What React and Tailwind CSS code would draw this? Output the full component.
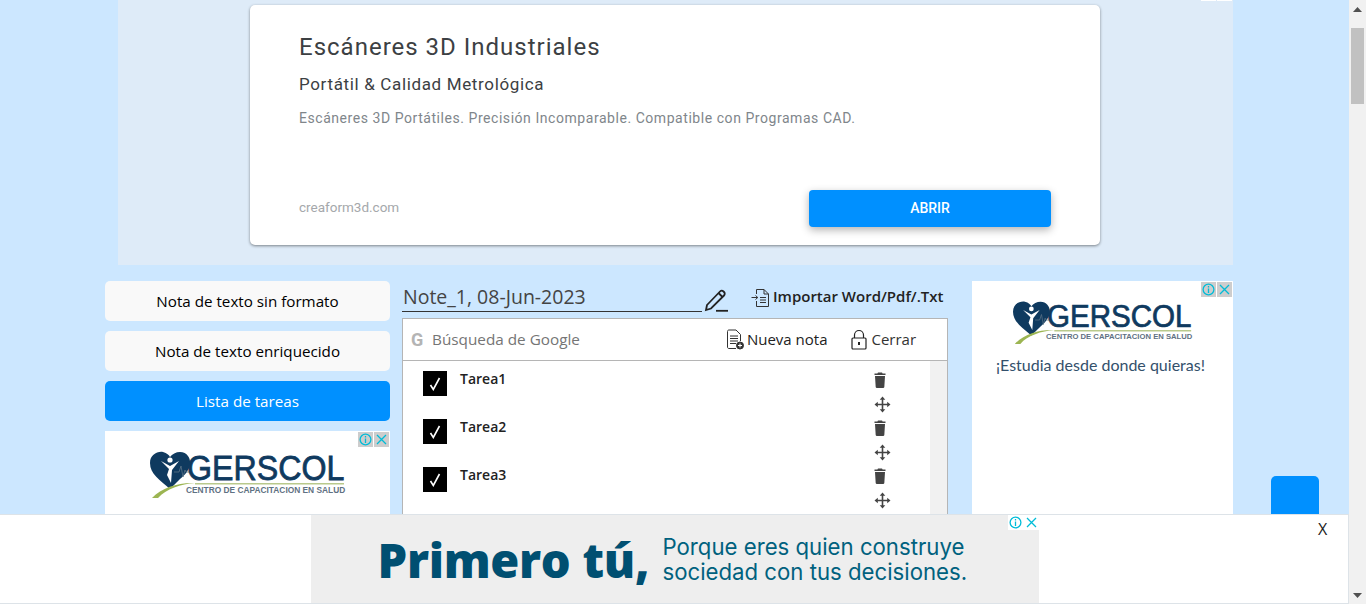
import React from "react";

const ui = "font-['Open_Sans','Noto_Sans',sans-serif]";

function AdChoices({ plain }) {
  return (
    <div className="flex gap-px">
      <span className={`w-[15px] h-[15px] flex items-center justify-center ${plain ? "bg-white" : "bg-[#cdcdcd]"}`}>
        <svg width="13" height="13" viewBox="0 0 13 13" fill="none" stroke="#00bcd8" strokeWidth="1.3">
          <circle cx="6.5" cy="6.5" r="5.4" />
          <path d="M6.5 5.5V10M6.5 3v1.4" />
        </svg>
      </span>
      <span className={`w-[15px] h-[15px] flex items-center justify-center ${plain ? "bg-white" : "bg-[#cdcdcd]"}`}>
        <svg width="13" height="13" viewBox="0 0 13 13" fill="none" stroke="#00bcd8" strokeWidth="1.3">
          <path d="M2 2l9 9M11 2l-9 9" />
        </svg>
      </span>
    </div>
  );
}

function Logo({ className }) {
  return (
    <svg viewBox="0 -6 196 52" className={className}>
      <path d="M20 37 C10 28 0 22 0 11 C0 3 7 -1 13 0 C17 1 19 3 20 5 C22 2 26 0 30 0 C37 0 41 6 40 13 C39 18 35 23 30 27 Z" fill="#0f3a5f" />
      <circle cx="20" cy="8" r="2.6" fill="#fff" />
      <path d="M11 9 L20 14 L29 9 L22 18 L21 31 L17 23 L19 17 Z" fill="#fff" />
      <path d="M24 20 H29 L31 14 L33 25 L35 18 L36 20 H42" fill="none" stroke="#5c7386" strokeWidth="0.8" />
      <path d="M2 46 C12 35 30 30 45 31 C31 32 16 37 8 46 Z" fill="#9cb552" />
      <path d="M45 31 H194 V32.4 H45 Z" fill="#b9c98c" />
      <text transform="translate(37 28) scale(0.92 1)" fontFamily="'Liberation Sans',sans-serif" fontSize="35" fill="#0f3a5f" stroke="#0f3a5f" strokeWidth="0.8">GERSCOL</text>
      <text transform="translate(36 41) scale(1.02 1)" fontFamily="'Liberation Sans',sans-serif" fontSize="8.2" fontWeight="700" fill="#5f7183">CENTRO DE CAPACITACION EN SALUD</text>
    </svg>
  );
}

function SideButton({ children, active }) {
  return (
    <div className={`h-10 rounded-[5px] flex items-center justify-center text-[15.2px] ${active ? "bg-[#0090ff] text-white" : "bg-[#f9f9f9] text-black"}`}>
      {children}
    </div>
  );
}

function MoveIcon() {
  return (
    <svg width="17" height="17" viewBox="0 0 17 17" fill="#444">
      <path d="M8.5 0.5L11.3 3.8H9.3V7.7H13.2V5.7L16.5 8.5L13.2 11.3V9.3H9.3V13.2H11.3L8.5 16.5L5.7 13.2H7.7V9.3H3.8V11.3L0.5 8.5L3.8 5.7V7.7H7.7V3.8H5.7Z" />
    </svg>
  );
}

function TrashIcon() {
  return (
    <svg width="12" height="16" viewBox="0 0 12 16" fill="#444">
      <path d="M4 0.5H8L8.6 1.4H11.5V3H0.5V1.4H3.4Z" />
      <path d="M1 4H11L10.3 15C10.2 15.6 9.8 16 9.2 16H2.8C2.2 16 1.8 15.6 1.7 15Z" />
    </svg>
  );
}

function Task({ label }) {
  return (
    <div className="h-12 flex">
      <div className="ml-5 mt-[10px] w-[24px] h-[25px] bg-black flex items-center justify-center">
        <svg width="12" height="14" viewBox="0 0 12 14" fill="none" stroke="#fff" strokeWidth="1.6">
          <path d="M1.5 8L4.3 12.5L10.5 1" />
        </svg>
      </div>
      <div className="ml-[13px] mt-[8px] h-fit text-[14px] leading-[20px] font-semibold text-[#222]">{label}</div>
      <div className="ml-auto mr-[39px] w-[17px] flex flex-col items-center pt-[11px]">
        <div className="-ml-[5px]"><TrashIcon /></div>
        <div className="mt-[8px]"><MoveIcon /></div>
      </div>
    </div>
  );
}

export default function App() {
  return (
    <div className={`relative w-[1366px] h-[604px] overflow-hidden flex bg-[#cce7ff] ${ui}`}>
      <main className="w-[1349px] shrink-0">
        {/* top ad */}
        <div className="ml-[118px] w-[1115px] h-[265px] bg-[#deebf8] pl-[132px] pt-[5px] font-['Roboto',sans-serif]">
          <div className="relative w-[850px] h-[240px] bg-white rounded-[5px] shadow-[0_1px_3px_rgba(0,0,0,0.45)] pl-[49px] pt-[27px] flex flex-col">
            <div className="text-[24px] leading-[30px] tracking-[1px] text-[#3c4043]">Escáneres 3D Industriales</div>
            <div className="mt-[10px] text-[17px] leading-[24px] tracking-[0.65px] text-[#3c4043]">Portátil &amp; Calidad Metrológica</div>
            <div className="mt-[12px] text-[14px] leading-[20px] tracking-[0.55px] text-[#80868b]">Escáneres 3D Portátiles. Precisión Incomparable. Compatible con Programas CAD.</div>
            <div className="mt-auto mb-[18px] pr-[49px] flex items-center justify-between">
              <div className="mb-[4px] text-[13.5px] leading-[18px] text-[#a5a8ab]">creaform3d.com</div>
              <div className="w-[242px] h-[37px] rounded-[4px] bg-[#0090ff] shadow-[0_3px_8px_rgba(0,0,0,0.3)] flex items-center justify-center text-white text-[14px] font-medium">ABRIR</div>
            </div>
          </div>
        </div>

        <div className="mt-4 ml-[105px] flex items-start">
          {/* left */}
          <div className="w-[285px] flex flex-col gap-[10px]">
            <SideButton>Nota de texto sin formato</SideButton>
            <SideButton>Nota de texto enriquecido</SideButton>
            <SideButton active>Lista de tareas</SideButton>
            <div className="relative h-[90px] bg-white flex justify-center pt-[15px]">
              <div className="absolute top-px right-px"><AdChoices /></div>
              <Logo className="w-[196px] h-[52px]" />
            </div>
          </div>

          {/* middle */}
          <div className="ml-3 w-[546px]">
            <div className="flex items-end h-[31px]">
              <div className="w-[300px] h-[31px] pl-px border-b border-[#333] text-[19.5px] leading-[31px] text-[#444]">Note_1, 08-Jun-2023</div>
              <svg width="24" height="24" viewBox="0 0 24 24" fill="none" stroke="#222" strokeWidth="1.8" className="ml-[2px]">
                <path d="M3 17L16 3.5C17 2.5 18.5 2.5 19.5 3.5L20 4C21 5 21 6.5 20 7.5L7 20.5L2 22Z" />
                <path d="M14.5 5L18.5 9" />
                <path d="M12 22.8H24" />
              </svg>
              <svg width="19" height="20" viewBox="0 0 19 20" fill="none" stroke="#333" strokeWidth="1" className="ml-[23px] mb-[4px]">
                <path d="M5.5 6V1.5H13L17.5 6V18.5H5.5V13" />
                <path d="M13 1.5V6H17.5M0.5 9.5H6.5M4.5 7.5L6.8 9.5L4.5 11.5M9 9.5H15M9 12H15M9 14.5H15" />
              </svg>
              <div className="ml-[3px] mb-[6px] text-[15px] leading-[20px] font-semibold text-[#222] whitespace-nowrap">Importar Word/Pdf/.Txt</div>
            </div>
            <div className="mt-[6px] border border-[#b5b5b5] bg-white">
              <div className="h-[42px] border-b border-[#b5b5b5] flex items-center">
                <span className="ml-2 w-[15px] text-[18px] font-bold font-['Roboto',sans-serif] text-[#b4b4b4] leading-none">G</span>
                <span className="ml-[6px] text-[15.3px] text-[#757575]">Búsqueda de Google</span>
                <svg width="18" height="21" viewBox="0 0 18 21" fill="none" stroke="#333" strokeWidth="1" className="ml-[146px]">
                  <path d="M10 19.5H3C2 19.5 1.5 19 1.5 18V2.5C1.5 1.5 2 1 3 1H10L14.5 5.5V12" />
                  <path d="M4 7H12M4 9.5H12M4 12H12M4 14.5H10" />
                  <circle cx="14" cy="16.5" r="3.5" fill="#333" />
                  <path d="M12 16.5H16M14 14.5V18.5" stroke="#fff" />
                </svg>
                <span className="ml-[3px] text-[15px] text-[#222]">Nueva nota</span>
                <svg width="16" height="21" viewBox="0 0 16 21" fill="none" stroke="#222" strokeWidth="1.2" className="ml-[24px]">
                  <path d="M3.5 9V6C3.5 3.5 5.5 1.5 8 1.5C10.5 1.5 12.5 3.5 12.5 6V9" />
                  <rect x="1" y="9" width="14" height="11" rx="1" />
                  <path d="M8 13V16" strokeWidth="2" />
                </svg>
                <span className="ml-[4px] text-[15px] text-[#333]">Cerrar</span>
              </div>
              <div className="flex h-[200px]">
                <div className="flex-1">
                  <Task label="Tarea1" />
                  <Task label="Tarea2" />
                  <Task label="Tarea3" />
                </div>
                <div className="w-[17px] bg-[#f1f1f1]" />
              </div>
            </div>
          </div>

          {/* right */}
          <div className="ml-6 w-[261px] h-[240px] bg-white relative">
            <div className="absolute top-[1px] right-[1px]"><AdChoices /></div>
            <div className="pt-[15px] flex justify-center">
              <Logo className="w-[180px] h-[48px]" />
            </div>
            <div className="mt-[9px] pr-[4px] text-center text-[16px] leading-[24px] text-[#33506b] font-['Lato',sans-serif]">¡Estudia desde donde quieras!</div>
          </div>
        </div>
      </main>

      {/* scrollbar */}
      <aside className="w-[17px] shrink-0 bg-[#f1f1f1] flex flex-col items-center">
        <svg width="9" height="5" viewBox="0 0 9 5" fill="#505050" className="mt-[7px]"><path d="M4.5 0L9 5H0Z" /></svg>
        <div className="mt-[16px] w-[13px] h-[76px] bg-[#c1c1c1]" />
        <svg width="9" height="5" viewBox="0 0 9 5" fill="#505050" className="mt-auto mb-[6px]"><path d="M4.5 5L9 0H0Z" /></svg>
      </aside>

      {/* ad choices clipped at very top */}
      <div className="absolute top-0 left-[1201px] flex gap-px">
        <span className="w-[15px] h-px bg-white" />
        <span className="w-[15px] h-px bg-white" />
      </div>

      {/* back to top */}
      <div className="absolute left-[1271px] top-[476px] w-12 h-12 rounded-[5px] bg-[#0090ff]" />

      {/* bottom fixed ad */}
      <div className="absolute left-0 top-[514px] w-[1349px] h-[90px] bg-white border-t border-b border-r border-[#dde3e8] flex justify-center">
        <div className="relative ml-px w-[728px] h-[88px] bg-[#eeeeee] flex items-center font-['Inter',sans-serif]">
          <div className="absolute top-0 right-0 flex bg-white"><AdChoices plain /></div>
          <div className="ml-[67px] text-[47px] font-extrabold font-['Open_Sans',sans-serif] leading-none tracking-[-0.3px] text-[#004f71] mt-[2px] whitespace-nowrap">Primero tú,</div>
          <div className="absolute left-[352px] top-[19px] text-[22.2px] leading-[25px] text-[#00617e] whitespace-nowrap">
            <div>Porque eres quien construye</div>
            <div>sociedad con tus decisiones.</div>
          </div>
        </div>
        <div className="absolute left-[1318px] top-[3px] text-[16px] leading-[22px] text-[#222]">X</div>
      </div>
    </div>
  );
}
